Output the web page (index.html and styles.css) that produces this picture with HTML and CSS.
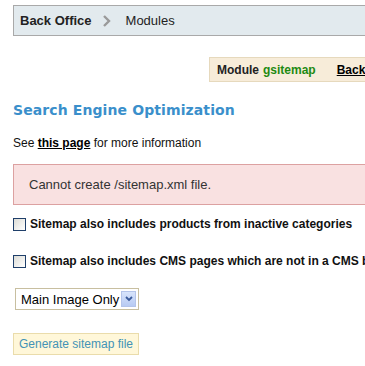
FILE: index.html
```html
<!DOCTYPE html>
<html>
<head>
<meta charset="utf-8">
<link rel="stylesheet" href="styles.css">
</head>
<body>
<div class="page">
  <div class="breadcrumb">
    <span class="crumb-root">Back Office</span>
    <svg class="crumb-sep" width="10" height="12" viewBox="0 0 10 12"><path d="M2 1 L7 6 L2 11" fill="none" stroke="#9a9a9a" stroke-width="2.4"/></svg>
    <span class="crumb">Modules</span>
  </div>
  <div class="toolbar">
    <div class="module-box">Module <span class="module-name">gsitemap</span><a class="back-link" href="#">Back to list</a></div>
  </div>
  <h2 class="title">Search Engine Optimization</h2>
  <p class="info">See <a class="info-link" href="#">this page</a> for more information</p>
  <div class="error">Cannot create /sitemap.xml file.</div>
  <label class="check"><span class="box"></span>Sitemap also includes products from inactive categories</label>
  <label class="check"><span class="box"></span>Sitemap also includes CMS pages which are not in a CMS block</label>
  <div class="select">
    <span class="select-text">Main Image Only</span>
    <span class="select-btn"><svg width="8" height="6" viewBox="0 0 8 6"><path d="M1 1 L4 4 L7 1" fill="none" stroke="#3a5a9a" stroke-width="1.8"/></svg></span>
  </div>
  <div class="actions"><button class="gen-btn">Generate sitemap file</button></div>
</div>
</body>
</html>
```
FILE: styles.css
```css
html, body { margin: 0; padding: 0; background: #fff; overflow: hidden; }
body { font-family: "Liberation Sans", Arial, sans-serif; font-size: 12px; color: #000; }
.page { padding: 5px 0 0 13px; width: 600px; }
.breadcrumb {
  display: flex; align-items: center; height: 29px;
  background: #e2eaee; border: 1px solid #a9a9a9;
  padding-left: 6px; font-size: 13px;
}
.crumb-root { font-weight: bold; color: #222; }
.crumb-sep { margin: 0 14px 0 10px; }
.crumb { color: #222; }
.toolbar { display: flex; margin-top: 21px; padding-left: 196px; }
.module-box {
  display: flex; align-items: center; height: 23px;
  background: #f7ecd9; border: 1px solid #e6d9bd; border-right: none;
  padding-left: 7px; font-size: 12px; font-weight: bold; color: #222; white-space: nowrap;
}
.module-name { color: #1d8a12; margin-left: 4px; }
.back-link { color: #000; margin-left: 21px; text-decoration: underline; }
.title {
  margin: 18px 0 0 0; font-family: "DejaVu Sans", Verdana, sans-serif;
  font-size: 14px; font-weight: bold; color: #3a8fcb; line-height: 20px; letter-spacing: 0.1px;
}
.info { margin: 16px 0 0 0; line-height: 14px; color: #111; }
.info-link { font-weight: bold; color: #000; text-decoration: underline; }
.error {
  margin-top: 14px; height: 39px; display: flex; align-items: center;
  background: #f9e1e1; border: 1px solid #dca1a1; border-right: none;
  padding-left: 15px; color: #333; font-size: 13px;
}
.check { display: flex; align-items: center; font-weight: bold; color: #111; white-space: nowrap; }
.check:first-of-type { margin-top: 12px; }
.check + .check { margin-top: 23px; }
.box {
  width: 11px; height: 11px; border: 1px solid #1f3f6a; margin-right: 4px;
  background: linear-gradient(135deg, #dcdcd6, #fff);
}
.select {
  display: inline-flex; align-items: center; margin: 20px 0 0 2px;
  width: 122px; height: 20px; border: 1px solid #c8bfa0; background: #fff;
}
.select-text { flex: 1; padding-left: 5px; font-size: 13px; color: #000; }
.select-btn {
  width: 15px; height: 16px; margin-right: 2px; display: flex; align-items: center; justify-content: center;
  background: linear-gradient(#d8e4fb, #b7caf3); border: 1px solid #b4c4ea; box-sizing: border-box;
}
.actions { margin-top: 23px; }
.gen-btn {
  font-family: "Liberation Sans", Arial, sans-serif; font-size: 12px; color: #4393b6;
  background: #fff7d9; border: 1px solid #eadcab; height: 22px; padding: 0 4px; width: 126px;
}
```
